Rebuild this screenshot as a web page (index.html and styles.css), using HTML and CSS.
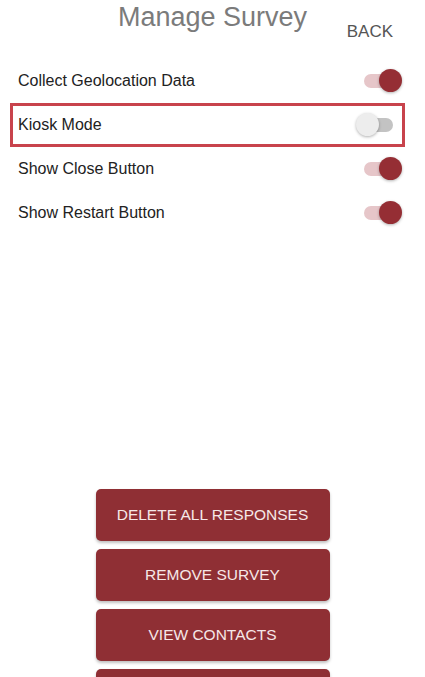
FILE: index.html
```html
<!DOCTYPE html>
<html lang="en">
<head>
    <meta charset="UTF-8">
    <meta name="viewport" content="width=device-width, initial-scale=1.0">
    <title>Manage Survey</title>
    <link rel="stylesheet" href="styles.css">
</head>
<body>
    <div class="header">
        <div class="title">Manage Survey</div>
        <div class="back">BACK</div>
    </div>

    <!-- Settings -->
    <div class="settings">
        <div class="setting">
            <span class="label">Collect Geolocation Data</span>
            <div class="toggle on"><span class="track"></span><span class="thumb"></span></div>
        </div>
        <div class="setting selected">
            <span class="label">Kiosk Mode</span>
            <div class="toggle"><span class="track"></span><span class="thumb"></span></div>
        </div>
        <div class="setting">
            <span class="label">Show Close Button</span>
            <div class="toggle on"><span class="track"></span><span class="thumb"></span></div>
        </div>
        <div class="setting">
            <span class="label">Show Restart Button</span>
            <div class="toggle on"><span class="track"></span><span class="thumb"></span></div>
        </div>
    </div>

    <!-- Actions -->
    <div class="actions">
        <div class="btn">DELETE ALL RESPONSES</div>
        <div class="btn">REMOVE SURVEY</div>
        <div class="btn">VIEW CONTACTS</div>
        <div class="btn"></div>
    </div>
</body>
</html>
```

FILE: styles.css
```css
body {
    margin: 0;
    font-family: 'Liberation Sans', Arial, sans-serif;
    background: #fff;
    color: #222;
}

.header {
    height: 59px;
    display: grid;
    grid-template-columns: 1fr auto 1fr;
    align-items: start;
}

.title {
    grid-column: 2;
    padding-top: 4px;
    font-size: 27px;
    line-height: 27px;
    color: #7b7b7b;
}

.back {
    grid-column: 3;
    justify-self: end;
    margin-top: 23px;
    padding-right: 32px;
    font-size: 17px;
    line-height: 17px;
    color: #555;
}

/* Rows with switches */
.setting {
    height: 44px;
    margin: 0 20px 0 10px;
    padding-left: 5px;
    border: 3px solid transparent;
    box-sizing: border-box;
    display: flex;
    align-items: center;
    justify-content: space-between;
}

.setting.selected {
    margin-right: 20px;
    width: 395px;
    border-color: #c8434c;
}

.label {
    font-size: 16px;
}

.toggle {
    position: relative;
    width: 47px;
    height: 24px;
    flex-shrink: 0;
}

.setting.selected .toggle {
    margin-right: -1px;
}

.track {
    position: absolute;
    left: 9px;
    top: 5px;
    width: 28px;
    height: 14px;
    border-radius: 7px;
    background: #c3c3c3;
}

.thumb {
    position: absolute;
    left: 0;
    top: 0;
    width: 23px;
    height: 23px;
    border-radius: 50%;
    background: #ededed;
    box-shadow: 0 1px 3px rgba(0,0,0,0.3);
}

.toggle.on .track {
    background: #e6c6c9;
}

.toggle.on .thumb {
    left: 24px;
    background: #952e34;
}

/* Buttons */
.actions {
    margin-top: 254px;
    display: flex;
    flex-direction: column;
    align-items: center;
    gap: 8px;
}

.btn {
    width: 234px;
    height: 52px;
    display: flex;
    align-items: center;
    justify-content: center;
    background: #8f2f34;
    color: #f6e8e8;
    font-size: 15.5px;
    border-radius: 5px;
    box-shadow: 0 2px 3px rgba(0,0,0,0.25);
}
```
